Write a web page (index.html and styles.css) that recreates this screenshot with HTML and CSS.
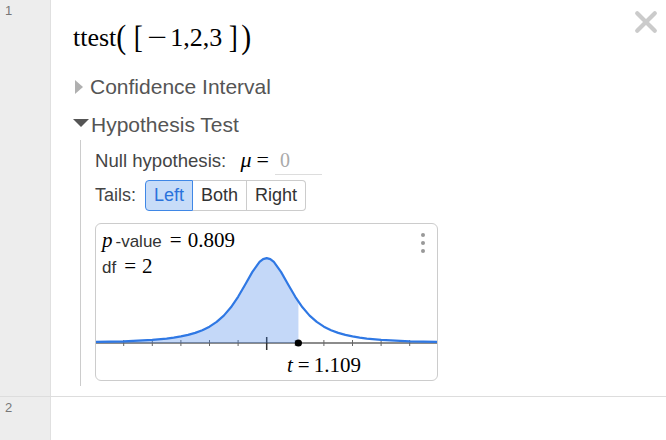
FILE: index.html
```html
<!DOCTYPE html>
<html>
<head>
<meta charset="utf-8">
<link rel="stylesheet" href="styles.css">
</head>
<body>
<div class="list">
  <div class="expr expr-main">
    <div class="gutter"><span class="num">1</span></div>
    <div class="body">
      <div class="formula"><span class="op">ttest</span><span class="paren">(</span><span class="bracket">[</span><span class="minus">−</span><span>1,2,3</span><span class="bracket close-b">]</span><span class="paren">)</span></div>
      <button class="close" aria-label="Delete">
        <svg width="24" height="24" viewBox="0 0 24 24"><path d="M3.2 3.2 L20.8 20.8 M20.8 3.2 L3.2 20.8" stroke="#cbcbcb" stroke-width="4.2" stroke-linecap="round" fill="none"/></svg>
      </button>
      <div class="section collapsed"><span class="tri-right"></span><span class="section-title">Confidence Interval</span></div>
      <div class="section open"><span class="tri-down"></span><span class="section-title">Hypothesis Test</span></div>
      <div class="section-body">
        <div class="hyp-row">Null hypothesis: <span class="math mu">μ</span><span class="math eq">=</span><span class="input">0</span></div>
        <div class="tails-row">
          <span class="tails-label">Tails:</span>
          <div class="seg">
            <button class="seg-btn on">Left</button><button class="seg-btn">Both</button><button class="seg-btn">Right</button>
          </div>
        </div>
        <div class="plot">
          <svg class="plot-canvas" width="341" height="156" viewBox="0 0 341 156">
            <line x1="0" y1="119" x2="341" y2="119" stroke="#666" stroke-width="1.5"/>
            <g stroke="#666" stroke-width="1">
              <line x1="27.7" y1="116" x2="27.7" y2="122"/>
              <line x1="56.3" y1="116" x2="56.3" y2="122"/>
              <line x1="84.9" y1="116" x2="84.9" y2="122"/>
              <line x1="113.5" y1="116" x2="113.5" y2="122"/>
              <line x1="142.1" y1="116" x2="142.1" y2="122"/>
              <line x1="199.3" y1="116" x2="199.3" y2="122"/>
              <line x1="227.9" y1="116" x2="227.9" y2="122"/>
              <line x1="256.5" y1="116" x2="256.5" y2="122"/>
              <line x1="285.1" y1="116" x2="285.1" y2="122"/>
              <line x1="313.7" y1="116" x2="313.7" y2="122"/>
            </g>
            <line x1="170.7" y1="113" x2="170.7" y2="126" stroke="#333" stroke-width="1.5"/>
            <polygon fill="#3b7ee8" fill-opacity="0.3" points="-1,119 -1,117.98 27.7,117.29 56.3,115.86 70.6,114.54 77.75,113.61 84.9,112.42 92.05,110.88 99.2,108.87 106.35,106.21 113.5,102.67 120.65,97.93 127.8,91.61 134.95,83.31 142.1,72.81 149.25,60.49 156.4,47.89 163.55,37.98 167.1,35.13 170.7,34.15 174.3,35.13 177.85,37.98 185,47.89 192.15,60.49 199.3,72.81 202.42,77.66 202.42,119"/>
            <polyline fill="none" stroke="#2f78e4" stroke-width="2.2" stroke-linejoin="round" points="-1,117.98 27.7,117.29 56.3,115.86 70.6,114.54 77.75,113.61 84.9,112.42 92.05,110.88 99.2,108.87 106.35,106.21 113.5,102.67 120.65,97.93 127.8,91.61 134.95,83.31 142.1,72.81 149.25,60.49 156.4,47.89 163.55,37.98 167.1,35.13 170.7,34.15 174.3,35.13 177.85,37.98 185,47.89 192.15,60.49 199.3,72.81 206.45,83.31 213.6,91.61 220.75,97.93 227.9,102.67 235.05,106.21 242.2,108.87 249.35,110.88 256.5,112.42 263.65,113.61 270.8,114.54 285.1,115.86 313.7,117.29 342.3,117.98"/>
            <circle cx="202.4" cy="119" r="3.6" fill="#000"/>
          </svg>
          <div class="stats">
            <div class="stat"><span class="math it">p</span><span class="word">-value</span><span class="math eq">=</span><span class="math">0.809</span></div>
            <div class="stat"><span class="word">df</span><span class="math eq">=</span><span class="math">2</span></div>
          </div>
          <div class="menu"><span class="dot"></span><span class="dot"></span><span class="dot"></span></div>
          <div class="t-label"><span class="math it">t</span><span class="math eq">=</span><span class="math">1.109</span></div>
        </div>
      </div>
    </div>
  </div>
  <div class="expr expr-empty">
    <div class="gutter"><span class="num">2</span></div>
    <div class="body"></div>
  </div>
</div>
</body>
</html>
```

FILE: styles.css
```css
* { box-sizing: border-box; }
html, body { margin: 0; padding: 0; }
body {
  width: 666px;
  height: 440px;
  overflow: hidden;
  background: #fff;
  font-family: "Liberation Sans", Arial, sans-serif;
  color: #333;
}
.expr {
  display: flex;
  border-bottom: 1px solid #dddddd;
}
.expr-main { height: 397px; }
.expr-empty { height: 43px; border-bottom: none; }
.gutter {
  width: 51px;
  flex: none;
  background: #ededed;
  border-right: 1px solid #e0e0e0;
  padding: 3px 0 0 5px;
  font-size: 13px;
  line-height: 15px;
  color: #777;
}
.body {
  flex: 1;
  position: relative;
}
.formula {
  height: 72px;
  padding: 23px 0 0 22px;
  font-family: "Liberation Serif", "Times New Roman", serif;
  font-size: 26px;
  line-height: 30px;
  color: #000;
  white-space: nowrap;
}
.paren {
  display: inline-block;
  transform: scale(1.15, 1.3);
  margin: 0 1px;
}
.bracket {
  display: inline-block;
  transform: scale(1.05, 1.22);
  margin: 0 4px 0 7px;
}
.bracket.close-b { margin: 0 3px 0 7px; }
.minus {
  display: inline-block;
  transform: scaleX(1.35);
  margin: 0 6px 0 3px;
}
.close {
  position: absolute;
  top: 10px;
  right: 8px;
  width: 24px;
  height: 24px;
  padding: 0;
  border: 0;
  background: none;
}
.close svg { display: block; }
.section {
  display: flex;
  align-items: center;
  height: 30px;
  font-size: 21px;
  line-height: 30px;
  color: #555;
}
.section.open { margin-top: 8px; }
.tri-right {
  width: 0;
  height: 0;
  margin-left: 24px;
  margin-right: 7px;
  border-left: 8px solid #b0b0b0;
  border-top: 7px solid transparent;
  border-bottom: 7px solid transparent;
}
.tri-down {
  width: 0;
  height: 0;
  margin-left: 22px;
  margin-right: 2px;
  margin-bottom: 4px;
  border-top: 8px solid #555;
  border-left: 8.5px solid transparent;
  border-right: 8.5px solid transparent;
}
.section-body {
  margin-left: 29px;
  border-left: 1px solid #cccccc;
  padding: 0 0 5px 14px;
  margin-bottom: 10px;
}
.hyp-row {
  height: 37px;
  padding-top: 6px;
  font-size: 18.6px;
  line-height: 28px;
  color: #444;
  white-space: nowrap;
}
.math {
  font-family: "Liberation Serif", "Times New Roman", serif;
  font-size: 21px;
  color: #000;
}
.mu { font-style: italic; margin-left: 9px; font-size: 22px; }
.hyp-row .eq { margin: 0 6px 0 5px; font-size: 22px; }
.input {
  display: inline-block;
  width: 47px;
  padding: 0 0 4px 5px;
  border-bottom: 1px solid #dddddd;
  font-family: "Liberation Serif", "Times New Roman", serif;
  font-size: 20px;
  line-height: 1;
  color: #aaa;
}
.tails-row {
  display: flex;
  align-items: center;
  height: 31px;
  margin-top: 3px;
  font-size: 18px;
  color: #444;
}
.tails-label { margin-right: 9px; }
.seg { display: flex; height: 31px; }
.seg-btn {
  height: 31px;
  padding: 0 8px;
  border: 1px solid #cccccc;
  border-left-width: 0;
  background: #fff;
  font-family: "Liberation Sans", Arial, sans-serif;
  font-size: 18px;
  color: #333;
}
.seg-btn:first-child { border-left-width: 1px; border-radius: 4px 0 0 4px; }
.seg-btn:last-child { border-radius: 0 4px 4px 0; }
.seg-btn.on {
  background: #c7dcf8;
  border-color: #3f87e6;
  color: #2a72dc;
}
.plot {
  position: relative;
  width: 343px;
  height: 158px;
  margin-top: 12px;
  border: 1px solid #cccccc;
  border-radius: 6px;
  overflow: hidden;
}
.plot-canvas {
  position: absolute;
  left: 0;
  top: 0;
}
.stats {
  position: relative;
  padding: 4px 0 0 6px;
  line-height: 25px;
}
.stat { white-space: nowrap; }
.word { font-size: 17px; color: #333; }
.it { font-style: italic; margin-right: 3px; }
.stat .eq { margin: 0 6px 0 8px; }
.menu {
  position: absolute;
  left: 325px;
  top: 9px;
  display: flex;
  flex-direction: column;
  gap: 4px;
}
.dot {
  width: 4px;
  height: 4px;
  border-radius: 50%;
  background: #999;
}
.t-label {
  position: absolute;
  left: 191px;
  top: 130px;
  line-height: 22px;
  white-space: nowrap;
}
.t-label .it { margin-right: 0; }
.t-label .eq { margin: 0 4px 0 5px; }
```
